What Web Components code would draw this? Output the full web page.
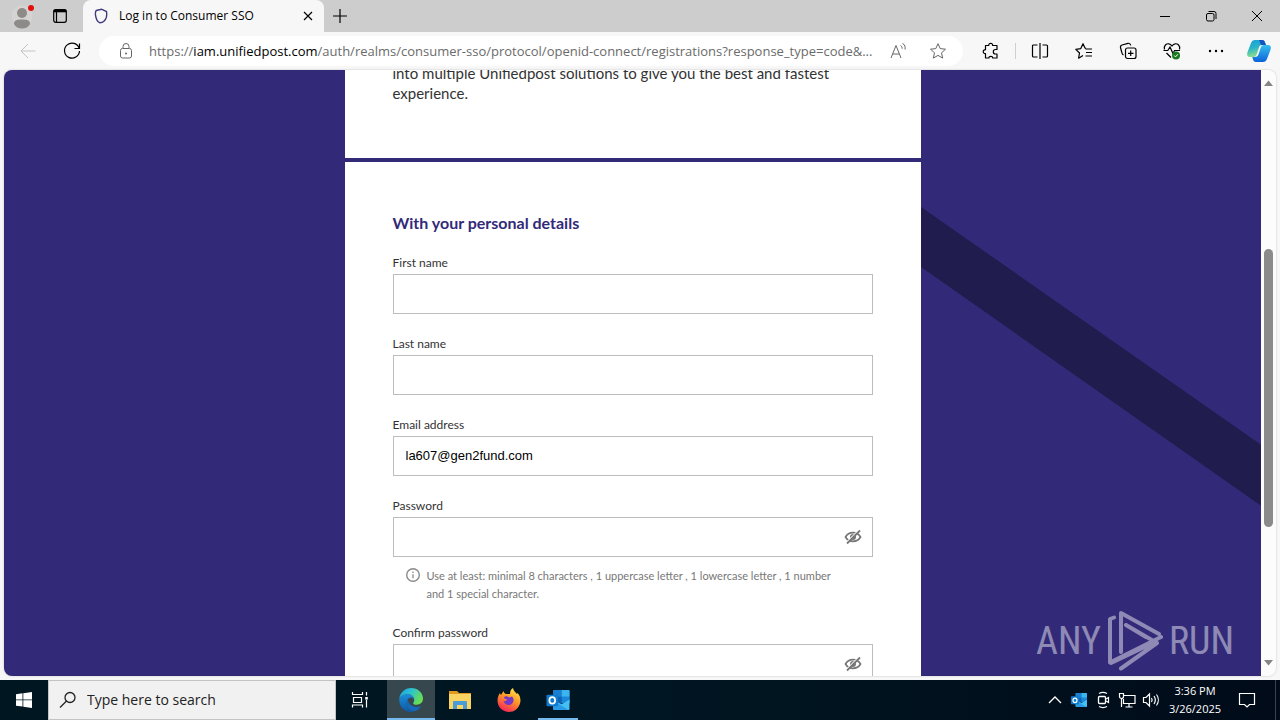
<!DOCTYPE html>
<html lang="en">
<head>
<meta charset="utf-8">
<title>Log in to Consumer SSO</title>
<style>
html, body { margin: 0; height: 100%; overflow: hidden; }
body { font-family: "Open Sans", "Noto Sans", sans-serif; font-size: 12px; color: #000; }
</style>
</head>
<body>
<desktop-screen></desktop-screen>
<script>
const define = (name, html, setup) => {
  const tpl = document.createElement('template');
  tpl.innerHTML = `<style>*{box-sizing:border-box}button{font:inherit;color:inherit;background:none;border:0;padding:0;margin:0;display:flex;align-items:center;justify-content:center}</style>` + html;
  customElements.define(name, class extends HTMLElement {
    connectedCallback() {
      if (this.shadowRoot) return;
      this.attachShadow({ mode: 'open' }).append(tpl.content.cloneNode(true));
      if (setup) setup.call(this, this.shadowRoot);
    }
  });
};

const line = (size, body, extra = '') => `<svg width="${size}" height="${size}" viewBox="0 0 ${size} ${size}" fill="none" stroke="currentColor" ${extra}>${body}</svg>`;
const outlook = `<rect x="7" y="1" width="17" height="14" rx="1" fill="#1490df"/><path d="M7 1h9v7H7z" fill="#1a7fd0"/><path d="M16 1h7a1 1 0 0 1 1 1v6h-8z" fill="#3cb4f0"/><path d="M7 8h9v7H7z" fill="#0f62b4"/><path d="M16 8h8v7h-8z" fill="#1c86d8"/><path d="M7 21V12l9 4 8-5v10a1 1 0 0 1-1 1H8z" fill="#45c0f5"/><path d="M7 12l16 10H8a1 1 0 0 1-1-1z" fill="#2a9be6"/><rect x="0" y="6" width="12" height="12" rx="1" fill="#0f7bd0"/><ellipse cx="6" cy="12" rx="3" ry="3.4" fill="none" stroke="#fff" stroke-width="1.8"/>`;
const ICONS = {
  profile: `<svg width="24" height="28" viewBox="0 0 24 28"><circle cx="12" cy="14" r="10.5" fill="#d6d4d2"/><circle cx="12" cy="11" r="5" fill="#8d8a88"/><path d="M4 22c0-4 3.500-4.500 8-4.500s8 .5 8 4.500c-1.500 3.300-4.500 4.500-8 4.500S5.500 25.300 4 22z" fill="#8d8a88"/><circle cx="21" cy="6" r="3" fill="#e01010"/></svg>`,
  tabs: line(16, '<rect x="1.700" y="1.700" width="12.600" height="12.600" rx="2" stroke-width="1.200"/><path d="M1.700 3h12.600" stroke-width="2.600"/><path d="M4.500 4v10" stroke-width="1.200"/>'),
  shield: line(16, '<path d="M3.200 2.500 8.500 1.200l5 2.400c.7 3.300.1 7-2.600 9.700-.9.900-2.300 1.500-4 1.500-2.500-1-4-4.400-4.500-8.200-.1-2 .1-3.300.8-4.100z" stroke="#3f3a7c" stroke-width="1.400"/>'),
  x: line(16, '<path d="m4 4 8 8m0-8-8 8" stroke-width="1.200"/>'),
  plus: line(16, '<path d="M8 1v14M1 8h14" stroke-width="1.200"/>'),
  minimize: line(16, '<path d="M3 8.500h10"/>'),
  restore: line(16, '<rect x="3.500" y="5.500" width="7.500" height="7.500" rx="1.500"/><path d="M5.500 3.500H11a2 2 0 0 1 2 2V11"/>'),
  close: line(16, '<path d="m3 3 10 10m0-10L3 13"/>'),
  back: line(16, '<path d="M15.500 8H1m7-7L1 8l7 7" stroke="#c4c4c4"/>'),
  refresh: line(18, '<path d="M16.200 6.500A7.500 7.500 0 1 0 16.500 9M16.500 1.500v5h-5" stroke-width="1.200"/>'),
  lock: line(18, '<rect x="3.500" y="6.500" width="11" height="9.500" rx="2" stroke="#666"/><path d="M6 6V4.500a3 3 0 0 1 6 0V6" stroke="#666"/><circle cx="9" cy="11.500" r="1" fill="#666" stroke="none"/>'),
  read: line(18, '<path d="M2 16 7 3.500 12 16M3.500 12h7M11.500 3.500c1.300.6 1.800 2 1.600 3.200M13.500 1.500c2.500 1 3 3.800 2.500 6" stroke="#666"/>'),
  star: line(18, '<path d="m9 1.700 2.200 4.900 5.300.6-4 3.600 1.200 5.300L9 13.400l-4.700 2.700 1.200-5.300-4-3.600 5.300-.6z" stroke="#666" stroke-linejoin="round"/>'),
  puzzle: line(18, '<path d="M3.500 3.500h3.200c-.3-2.800 4.300-2.800 4 0h4.300v4h-1.600c-2.800 0-2.800 4.500 0 4.500H15v4h-4.300c.2-2.300-4-2.300-3.800 0H3.500v-4.300c-3 .2-3-4.300 0-4z" stroke-width="1.200" stroke-linejoin="round"/>'),
  split: line(18, '<path d="M6.500 3h-4a1 1 0 0 0-1 1v10a1 1 0 0 0 1 1h4M11.500 3h4a1 1 0 0 1 1 1v10a1 1 0 0 1-1 1h-4M9 1v16" stroke-width="1.200"/>'),
  favorites: line(18, '<path d="M11 6.500 10 6 8 1.700 5.800 6.600l-5 .7 3.700 3.700-.9 5.200L8 13.500M10.500 7H17M11 10.500h6M10.500 14H17" stroke-width="1.200" stroke-linejoin="round"/>'),
  collections: line(18, '<rect x="6.500" y="6" width="10.500" height="10.500" rx="2" stroke-width="1.200"/><path d="M11.700 8.500v5.500M9 11.300h5.500M4.500 13C3.200 12.500 3 11.500 2.800 10.500L1.500 5.500C1.200 4 2 3.300 3 3l6-1.700c1.500-.3 2.300.3 2.800 2" stroke-width="1.200"/>'),
  health: line(18, '<path d="M1.500 7.500C.5 3.500 3.500 1.500 5.800 1.800 7.500 2 8.300 3 9 4c.7-1 1.500-2 3.200-2.200 2.300-.3 5.300 1.700 4.300 5.700M3.500 11 8 15.500M.5 8.500h4.300L7 5l3 6.500 1.500-3H17" stroke-width="1.200"/><circle cx="13" cy="13.500" r="4" fill="#197a1f" stroke="none"/><path d="m11.200 13.500 1.300 1.400 2.300-2.600" stroke="#fff"/>'),
  more: line(18, '<g fill="currentColor" stroke="none"><circle cx="3" cy="9" r="1.200"/><circle cx="9" cy="9" r="1.200"/><circle cx="15" cy="9" r="1.200"/></g>'),
  copilot: `<svg width="24" height="24" viewBox="0 0 24 24"><defs><linearGradient id="a" x1="0" y1="0" x2=".3" y2="1"><stop offset="0" stop-color="#169fd8"/><stop offset=".5" stop-color="#28b3c9"/><stop offset="1" stop-color="#8de08a"/></linearGradient><linearGradient id="b" x1="0" y1="0" x2="0" y2="1"><stop offset="0" stop-color="#36bff0"/><stop offset="1" stop-color="#0d62d8"/></linearGradient></defs><path d="M8 1h7c2 0 2.500 1 3 2.500L19 6h-4c-2 0-2.500 1-3 2.500l-2 6C9.300 17 8.300 18 6.500 18H3c-2.500 0-3.500-2-2.600-4.500L4 4c.8-2 2-3 4-3z" fill="url(#a)"/><path d="M12 1h3c2 0 2.500 1 3 2.500L19 6h-5z" fill="#1553c4"/><path d="M16 23H9c-2 0-2.500-1-3-2.500L5.300 18H8c2 0 3-1 3.600-3l2-6c.6-2 1.700-3 3.400-3h4c2.500 0 3.500 2 2.600 4.500L20 20c-.8 2-2 3-4 3z" fill="url(#b)"/></svg>`,
  eye: line(18, '<path d="M1.500 9C3 6.300 5.800 4.700 9 4.700s6 1.600 7.500 4.300c-1.500 2.700-4.300 4.300-7.500 4.300S3 11.700 1.500 9z" stroke="#777" stroke-width="1.700"/><circle cx="9" cy="9" r="3" fill="#777" stroke="none"/><path d="M2.500 14.500 14.500 2.500" stroke="#fff" stroke-width="1.500"/><path d="M3 15.500 16 2.500" stroke="#777" stroke-width="1.800"/>'),
  info: line(16, '<circle cx="8" cy="8" r="6.300" stroke="#8a8a8a" stroke-width="1.400"/><path d="M8 7.200v4M8 4.500V6" stroke="#8a8a8a" stroke-width="1.300"/>'),
  windows: `<svg width="16" height="16" viewBox="0 0 16 16" fill="#fff"><path d="M0 2.200 6.500 1.300v6.200H0zM7.300 1.200 16 0v7.500H7.300zM0 8.300h6.500v6.300L0 13.700zM7.300 8.300H16V16l-8.700-1.200z"/></svg>`,
  search: line(18, '<circle cx="11" cy="6.500" r="5" stroke-width="1.300"/><path d="M7.500 10 1 16.500" stroke-width="1.300"/>'),
  taskview: line(18, '<path d="M1.500 1v2.500h10V1M1.500 16.500V14h10v2.500M2.500 6.500v5h8v-5zM15.500 1v3.500M15.500 9v7.500" stroke-width="1.200"/><path d="M14.200 6h2.600v2.600h-2.600z" fill="currentColor" stroke="none"/>'),
  edge: `<svg width="24" height="24" viewBox="0 0 24 24"><defs><linearGradient id="a" x1="0" y1="0" x2="1" y2=".4"><stop offset="0" stop-color="#1d9fe0"/><stop offset=".5" stop-color="#2bc2d2"/><stop offset="1" stop-color="#67dd55"/></linearGradient><linearGradient id="b" x1="0" y1="0" x2="0" y2="1"><stop offset="0" stop-color="#1b8fd9"/><stop offset="1" stop-color="#0e58a6"/></linearGradient></defs><path d="M.2 11C1 4.500 6 0 12 0c7 0 12 5 12 10.500 0 4-3 6.200-6.200 6.200-2.800 0-4-1-3.600-1.800.5-.7 1-1.500 1-2.900C15 9 12.500 6.300 9 6.300 4.500 6.300 1 8.500.2 11z" fill="url(#a)"/><path d="M.2 11C1 8.500 4.500 6.300 9 6.300c3.500 0 6 2.500 6.200 5.200C14.500 10 13 9.500 12 9.500c-2.500 0-4.500 2.500-4.500 5.500 0 4.500 3.500 8 8 8.300-1 .5-2.300.7-3.500.7C5 24 0 18.500.2 11z" fill="url(#b)"/><path d="M9 11c-1 1-1.500 2.500-1.500 4 0 4.500 3.500 8 8 8.300 2.800-.8 5.300-2.800 6.800-5.400-6.300 2.800-13.300-.4-13.300-6.900z" fill="#1668b8"/></svg>`,
  folder: `<svg width="24" height="22" viewBox="0 0 24 22"><path d="M1 2h8l2 2h12v5H1z" fill="#e09a20"/><path d="M1 5h22v15H1z" fill="#fbd362"/><path d="M5 20v-7a1 1 0 0 1 1-1h12a1 1 0 0 1 1 1v7h-4v-4H9v4z" fill="#4a9cd6"/></svg>`,
  firefox: `<svg width="24" height="24" viewBox="0 0 24 24"><defs><linearGradient id="a" x1=".8" y1="0" x2=".3" y2="1"><stop offset="0" stop-color="#ffe84a"/><stop offset=".45" stop-color="#ff9a26"/><stop offset="1" stop-color="#f5205c"/></linearGradient></defs><path d="M3 5c.2 1 .7 1.500 1 2l2.500-4c.3 1.500 1.200 2.500 2.500 3h4c0-3 1-5 3-6 .5 3 2.500 4 4 6 .4-.3.3-.8.3-1.200C23.500 8 24 12 23 15.500 21.500 20.500 17 24 12 24 5.500 24 .5 19 .5 12.500.5 9.500 1.500 7 3 5z" fill="url(#a)"/><path d="M7 9c2-1.500 4-.5 5 .5l3-1c2 1.500 2.500 6-1 8-3.500 1.500-7-.5-7.500-3.500 2 .5 3-.5 4-1.500-2 0-3.500-1-3.500-2.500z" fill="#7638c8"/></svg>`,
  outlook: `<svg width="24" height="22" viewBox="0 0 24 23">${outlook}</svg>`,
  outlookSmall: `<svg width="16" height="16" viewBox="0 0 24 23">${outlook}</svg>`,
  chevron: line(16, '<path d="m2 11 6-6 6 6" stroke-width="1.300"/>'),
  meet: line(18, '<rect x="4.500" y="5.500" width="7" height="7" rx="1" stroke-width="1.300"/><path d="m12 8 2.500-1.500v5L12 10M5 2.500c2.500-1.300 5.500-1.300 8 0M5 15.500c2.500 1.300 5.500 1.300 8 0" stroke-width="1.200"/>'),
  network: line(18, '<path d="M6 4.500h11v8H5.500V8M11 12.500V16M7.500 16h7M1.500 2.500h4v3a2 2 0 0 1-4 0zM3.500 7.500V16" stroke-width="1.200"/>'),
  volume: line(18, '<path d="M1.500 6.500H4l3.500-3.500v12L4 11.500H1.500zM9.500 7c.8 1.200.8 2.800 0 4M12 5c1.600 2.400 1.600 5.600 0 8M14.500 3.500c2.400 3.200 2.400 7.800 0 11" stroke-width="1.200"/>'),
  notify: line(18, '<path d="M1.500 2.500h15v11h-5L9 16l-2.500-2.500h-5z" stroke-width="1.200"/>'),
};

define('ui-icon', `<style>:host{display:inline-flex;flex:none}svg{display:block;overflow:visible}</style>`, function (root) {
  root.append(document.createRange().createContextualFragment(ICONS[this.getAttribute('name')]));
});

define('tab-strip', `
<style>
:host{display:flex;align-items:stretch;background:#cdcdcd}
.lead{width:44px}.acts{width:32px;margin-right:7px}
.tab{display:flex;align-items:center;width:241px;padding:0 8px 0 10px;gap:10px;background:#f7f7f7;border-radius:8px 8px 0 0}
.tab span{flex:1;font-size:12px;line-height:16px;white-space:nowrap}
.new{width:32px}.space{flex:1}.win{width:46px}
</style>
<button class="lead" aria-label="Profile"><ui-icon name="profile"></ui-icon></button>
<button class="acts" aria-label="Tab actions"><ui-icon name="tabs"></ui-icon></button>
<div class="tab"><ui-icon name="shield"></ui-icon><span><slot></slot></span><button aria-label="Close tab"><ui-icon name="x"></ui-icon></button></div>
<button class="new" aria-label="New tab"><ui-icon name="plus"></ui-icon></button>
<div class="space"></div>
<button class="win" aria-label="Minimize"><ui-icon name="minimize"></ui-icon></button>
<button class="win" aria-label="Restore"><ui-icon name="restore"></ui-icon></button>
<button class="win" aria-label="Close"><ui-icon name="close"></ui-icon></button>`);

define('address-bar', `
<style>
:host{display:flex;align-items:center;min-width:0;height:30px;padding:0 5px 0 18px;border-radius:15px;background:#fff}
.url{flex:1;min-width:0;margin-left:14px;font-size:13px;line-height:20px;color:#6b6b6b;white-space:nowrap;overflow:hidden;text-overflow:ellipsis;outline:0}
b{font-weight:400;color:#000}
button{width:40px;height:30px}
</style>
<ui-icon name="lock"></ui-icon>
<div class="url" role="textbox" aria-label="Address">https://<b>iam.unifiedpost.com</b>/auth/realms/consumer-sso/protocol/openid-connect/registrations?response_type=code&amp;...</div>
<button aria-label="Read aloud"><ui-icon name="read"></ui-icon></button>
<button aria-label="Add to favorites"><ui-icon name="star"></ui-icon></button>`);

define('tool-bar', `
<style>
:host{display:flex;align-items:center;min-width:0;padding-left:6px;background:#f7f7f7}
button{width:44px;height:30px;flex:none}
address-bar{flex:1;margin:0 6px 0 5px}
i{width:1px;height:16px;margin:0 2px;background:#cfcfcf}
.last{width:42px}
</style>
<button aria-label="Back" disabled><ui-icon name="back"></ui-icon></button>
<button aria-label="Refresh"><ui-icon name="refresh"></ui-icon></button>
<address-bar></address-bar>
<button aria-label="Extensions"><ui-icon name="puzzle"></ui-icon></button><i></i>
<button aria-label="Split screen"><ui-icon name="split"></ui-icon></button>
<button aria-label="Favorites"><ui-icon name="favorites"></ui-icon></button>
<button aria-label="Collections"><ui-icon name="collections"></ui-icon></button>
<button aria-label="Browser essentials"><ui-icon name="health"></ui-icon></button>
<button aria-label="Settings and more"><ui-icon name="more"></ui-icon></button>
<button class="last" aria-label="Copilot"><ui-icon name="copilot"></ui-icon></button>`);

define('form-field', `
<style>
:host{display:block}
label{display:block;margin-bottom:2px;font-size:12px;line-height:18px;color:#333}
.box{display:flex;height:40px;border:1px solid #bdbdbd;background:#fff}
input{flex:1;min-width:0;padding:0 12px;border:0;outline:0;background:none;font:13px/20px "Liberation Sans",Arial,sans-serif;color:#000}
button{width:38px}
</style>
<label for="f"></label>
<div class="box"><input id="f"></div>
<slot></slot>`, function (root) {
  const input = root.querySelector('input');
  root.querySelector('label').textContent = this.getAttribute('label');
  input.type = this.getAttribute('type') || 'text';
  input.value = this.getAttribute('value') || '';
  if (input.type === 'password') {
    const b = document.createElement('button');
    b.type = 'button';
    b.setAttribute('aria-label', 'Show password');
    b.innerHTML = '<ui-icon name="eye"></ui-icon>';
    b.onclick = () => { input.type = input.type === 'password' ? 'text' : 'password'; };
    root.querySelector('.box').append(b);
  }
});

define('field-hint', `
<style>
:host{display:flex;gap:6px;margin-top:10px;padding:0 32px 0 12px;font-size:11px;line-height:18px;color:#777}
</style>
<ui-icon name="info"></ui-icon><span><slot></slot></span>`);

define('water-mark', `
<style>
:host{display:flex;align-items:center;gap:6px;color:#fff;opacity:.45;font:400 38px/60px "Roboto Condensed","Liberation Sans Narrow","Arial Narrow",sans-serif}
svg{display:block}
</style>
<span>ANY</span>
<svg width="56" height="62" viewBox="0 0 56 62" fill="none" stroke="currentColor" stroke-width="4" stroke-linejoin="round" stroke-linecap="round"><path d="M7 7.500 3 9v43.500L54 27M14 42V3l38 21M14 15v27M19 15l31 18L14 58.500M19 15l20 12M4 53l40-19"/></svg>
<span>RUN</span>`);

define('scroll-rail', `
<style>
:host{display:flex;flex-direction:column;align-items:center;flex:none;width:15px;padding:9px 0;background:#fcfcfc}
svg{display:block;flex:none}
.track{flex:1;display:grid;grid-template-rows:162fr 278fr 132fr;width:9px}
.track i{grid-row:2;border-radius:5px;background:#8b8b8b}
</style>
<svg width="9" height="8"><path d="M0 7h9L4.500 1.500z" fill="#858585"/></svg>
<div class="track"><i></i></div>
<svg width="9" height="8"><path d="M0 1h9L4.500 6.500z" fill="#858585"/></svg>`);

define('signup-page', `
<style>
:host{display:grid;grid-template-columns:1fr 576px 1fr;position:relative;overflow:hidden;background:#322a78;font-family:Lato,"Open Sans",sans-serif}
main{grid-column:2;grid-row:1;color:#333}
section{padding:0 48px;background:#fff}
.intro{padding-bottom:55px}
.intro p{margin:0;font-size:15px;line-height:20px}
.details{display:flex;flex-direction:column;margin-top:4px;padding-top:48px;padding-bottom:48px}
h2{margin:0 0 18px;font-size:16px;line-height:26px;color:#322a78}
form{display:flex;flex-direction:column;gap:21px}
.art{grid-column:3;grid-row:1;display:block;width:100%}
</style>
<main>
  <section class="intro"><p>into multiple Unifiedpost solutions to give you the best and fastest experience.</p></section>
  <section class="details">
    <h2>With your personal details</h2>
    <form>
      <form-field label="First name"></form-field>
      <form-field label="Last name"></form-field>
      <form-field label="Email address" type="email" value="la607@gen2fund.com"></form-field>
      <form-field label="Password" type="password"><field-hint>Use at least: minimal 8 characters , 1 uppercase letter , 1 lowercase letter , 1 number and 1 special character.</field-hint></form-field>
      <form-field label="Confirm password" type="password"></form-field>
    </form>
  </section>
</main>
<svg class="art" viewBox="0 0 340 613" height="613" preserveAspectRatio="none"><path d="M0 144 340 382v61L0 204z" fill="#211c4e"/></svg>`, function () {
  this.scrollTop = 7;
});

define('task-bar', `
<style>
:host{display:flex;align-items:stretch;min-width:0;background:linear-gradient(90deg,#001722,#001622 50%,#010b19);color:#fff}
.start{width:48px}
.search{display:flex;align-items:center;gap:10px;width:288px;padding:0 10px;background:#f1f1f1;border:1px solid #c4c4c4;color:#222}
.search input{flex:1;min-width:0;padding:0;border:0;outline:0;background:none;font:14px/20px "Open Sans","Noto Sans",sans-serif;color:#222}
.search input::placeholder{color:#222;opacity:1}
.view{width:48px;margin-right:3px}
.apps{display:flex;gap:1px;flex:1}
.apps button{width:48px}
.on{background:#36474e;border-bottom:2px solid #76b9ed;padding-top:2px}
.run{background:linear-gradient(#76b9ed,#76b9ed) 4px 100%/40px 2px no-repeat}
.tray button{width:24px}
.tray{display:flex}
time{width:64px;align-self:center;text-align:center;font-size:11px;line-height:18px}
.tray .note{width:40px}
.peek{width:5px;margin-left:8px;border-left:1px solid #3b4350}
</style>
<button class="start" aria-label="Start"><ui-icon name="windows"></ui-icon></button>
<label class="search"><ui-icon name="search"></ui-icon><input type="text" placeholder="Type here to search" aria-label="Search"></label>
<button class="view" aria-label="Task view"><ui-icon name="taskview"></ui-icon></button>
<div class="apps">
<button class="on" aria-label="Edge"><ui-icon name="edge"></ui-icon></button>
<button aria-label="File Explorer"><ui-icon name="folder"></ui-icon></button>
<button aria-label="Firefox"><ui-icon name="firefox"></ui-icon></button>
<button class="run" aria-label="Outlook"><ui-icon name="outlook"></ui-icon></button>
</div>
<div class="tray">
<button aria-label="Hidden icons"><ui-icon name="chevron"></ui-icon></button>
<button aria-label="Outlook"><ui-icon name="outlookSmall"></ui-icon></button>
<button aria-label="Meet Now"><ui-icon name="meet"></ui-icon></button>
<button aria-label="Network"><ui-icon name="network"></ui-icon></button>
<button aria-label="Volume"><ui-icon name="volume"></ui-icon></button>
<time datetime="2025-03-26T15:36">3:36 PM<br>3/26/2025</time>
<button class="note" aria-label="Notifications"><ui-icon name="notify"></ui-icon></button>
<div class="peek"></div>
</div>`);

define('desktop-screen', `
<style>
:host{display:grid;grid-template-columns:minmax(0,1fr);grid-template-rows:32px 38px minmax(0,1fr) 40px;height:100vh;background:#f7f7f7}
.view{position:relative;display:flex;margin:0 4px 4px;border-radius:8px;overflow:hidden;box-shadow:0 0 2px #bbb}
signup-page{flex:1;min-width:0}
water-mark{position:absolute;right:42px;bottom:4px}
</style>
<tab-strip>Log in to Consumer SSO</tab-strip>
<tool-bar></tool-bar>
<div class="view"><signup-page></signup-page><scroll-rail></scroll-rail><water-mark></water-mark></div>
<task-bar></task-bar>`);
</script>
</body>
</html>
